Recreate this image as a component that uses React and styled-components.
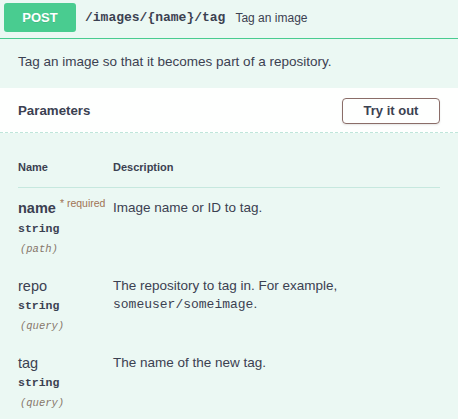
import styled, { createGlobalStyle } from 'styled-components';

const GlobalStyle = createGlobalStyle`
  html, body {
    margin: 0;
    padding: 0;
    background: #ebf8f3;
  }
  body {
    font-family: 'Liberation Sans', Arial, sans-serif;
    color: #3b4151;
  }
`;

const Opblock = styled.div`
  width: 458px;
  min-height: 419px;
  background: #ebf8f3;
`;

const Summary = styled.div`
  display: flex;
  align-items: center;
  box-sizing: border-box;
  height: 39px;
  padding: 0 4px 3px;
  border-bottom: 1px solid #49cc90;
`;

const Method = styled.span`
  display: flex;
  align-items: center;
  justify-content: center;
  width: 72px;
  height: 29px;
  border-radius: 3px;
  background: #49cc90;
  color: #fff;
  font-size: 13px;
  font-weight: 700;
  text-shadow: 0 1px 0 rgba(0, 0, 0, 0.1);
`;

const Path = styled.span`
  margin-left: 9px;
  font-family: 'Liberation Mono', 'Courier New', monospace;
  font-size: 13px;
  font-weight: 700;
  color: #3b4151;
`;

const SummaryText = styled.span`
  margin-left: 10px;
  font-size: 12px;
  color: #3b4151;
`;

const Description = styled.div`
  padding: 14px 18px 18px;
  font-size: 13.5px;
  line-height: 17px;
`;

const SectionHeader = styled.div`
  display: flex;
  align-items: center;
  justify-content: space-between;
  height: 45px;
  box-sizing: border-box;
  padding: 0 18px;
  background: rgba(255, 255, 255, 0.92);
  border-bottom: 1px dashed #bfe6da;
`;

const SectionTitle = styled.h4`
  margin: 0;
  font-size: 13.3px;
  font-weight: 700;
  color: #3b4151;
`;

const TryButton = styled.button`
  width: 98px;
  height: 26px;
  margin-top: 1px;
  border: 1px solid #8a6d68;
  border-radius: 4px;
  background: transparent;
  font-family: 'Liberation Sans', Arial, sans-serif;
  font-size: 13px;
  font-weight: 700;
  color: #3b4151;
  box-shadow: 0 1px 2px rgba(0, 0, 0, 0.1);
`;

const Params = styled.div`
  padding: 0 18px;
`;

const Table = styled.table`
  width: 100%;
  border-collapse: collapse;
`;

const HeadCell = styled.th`
  text-align: left;
  padding: 27px 0 12px;
  font-size: 11px;
  font-weight: 700;
  line-height: 15px;
  color: #3b4151;
  border-bottom: 1px solid #c6e8de;
  width: ${(p) => p.$width || 'auto'};
`;

const Cell = styled.td`
  vertical-align: top;
  padding: 10px 0 7px;
`;

const DescCell = styled(Cell)`
  padding-top: 11px;
  font-size: 13.5px;
  line-height: 18px;
  color: #3b4151;
`;

const ParamName = styled.div`
  font-size: 14.5px;
  line-height: 20px;
  font-weight: ${(p) => (p.$required ? 700 : 400)};
  color: #3b4151;
  white-space: nowrap;
`;

const Required = styled.span`
  position: relative;
  top: -6px;
  margin-left: 4px;
  font-size: 10.5px;
  font-weight: 400;
  color: #a07455;
`;

const ParamType = styled.div`
  font-family: 'Liberation Mono', 'Courier New', monospace;
  font-size: 11.5px;
  font-weight: 700;
  line-height: 20px;
  color: #3b4151;
`;

const ParamIn = styled.div`
  padding-left: 2px;
  font-family: 'Liberation Mono', 'Courier New', monospace;
  font-size: 10.5px;
  font-style: italic;
  line-height: 20px;
  color: #86766a;
`;

const Code = styled.code`
  font-family: 'Liberation Mono', 'Courier New', monospace;
  font-size: 13px;
`;

const params = [
  { name: 'name', required: true, type: 'string', in: 'path', desc: 'Image name or ID to tag.' },
  {
    name: 'repo',
    type: 'string',
    in: 'query',
    desc: (
      <>
        The repository to tag in. For example, <Code>someuser/someimage</Code>.
      </>
    ),
  },
  { name: 'tag', type: 'string', in: 'query', desc: 'The name of the new tag.' },
];

export default function App() {
  return (
    <>
      <GlobalStyle />
      <Opblock>
        <Summary>
          <Method>POST</Method>
          <Path>/images/&#123;name&#125;/tag</Path>
          <SummaryText>Tag an image</SummaryText>
        </Summary>
        <Description>Tag an image so that it becomes part of a repository.</Description>
        <SectionHeader>
          <SectionTitle>Parameters</SectionTitle>
          <TryButton>Try it out</TryButton>
        </SectionHeader>
        <Params>
          <Table>
            <thead>
              <tr>
                <HeadCell $width="95px">Name</HeadCell>
                <HeadCell>Description</HeadCell>
              </tr>
            </thead>
            <tbody>
              {params.map((p) => (
                <tr key={p.name}>
                  <Cell>
                    <ParamName $required={p.required}>
                      {p.name}
                      {p.required && <Required>* required</Required>}
                    </ParamName>
                    <ParamType>{p.type}</ParamType>
                    <ParamIn>({p.in})</ParamIn>
                  </Cell>
                  <DescCell>{p.desc}</DescCell>
                </tr>
              ))}
            </tbody>
          </Table>
        </Params>
      </Opblock>
    </>
  );
}
